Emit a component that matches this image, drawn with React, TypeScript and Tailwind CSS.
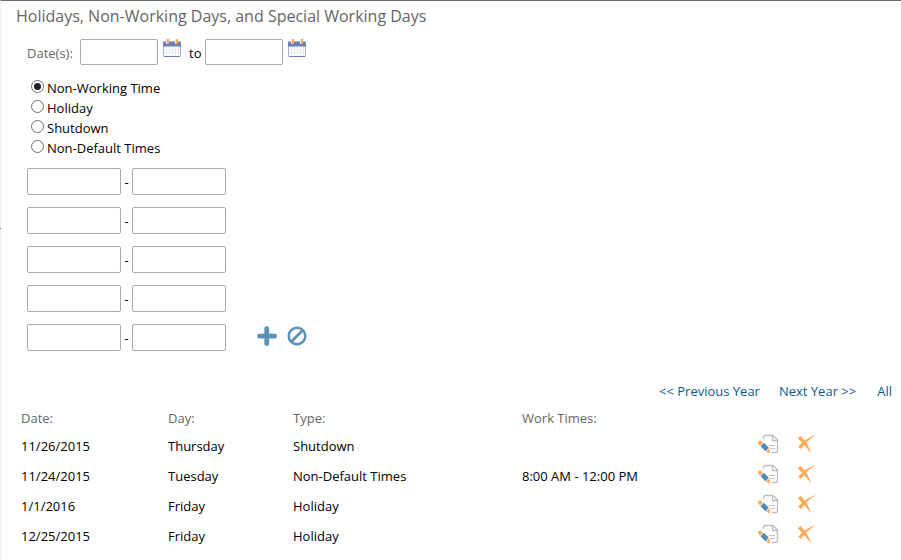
import React from 'react';

const CalendarIcon = () => (
    <svg width="19" height="19" viewBox="0 0 19 19" aria-hidden="true">
        <rect x="0.5" y="3.5" width="17" height="14" rx="1" fill="#fff" stroke="#a3aed0" />
        <path d="M3.5 8v9M6.5 8v9M9.5 8v9M12.5 8v9M15.5 8v9M1 10.5h16M1 13.5h16" stroke="#ececf0" fill="none" />
        <path d="M0 3.5q0-1 1-1h16q1 0 1 1v4H0z" fill="#6a7fb2" />
        <path d="M1 17.5h16" stroke="#6a7fb2" />
        <path d="M3 0h3v5H3zM12 0h3v5h-3z" fill="#fbe5d6" />
        <path d="M4 0h2v5H4zM13 0h2v5h-2z" fill="#f6a56b" />
    </svg>
);

const AddIcon = () => (
    <svg width="20" height="20" viewBox="0 0 20 20" aria-hidden="true">
        <path d="M10 2.8v14.9M2.8 10.2h14.9" stroke="#c4cbd0" strokeWidth="5" strokeLinecap="round" />
        <path d="M9.7 2.5v15M2.5 10h15" stroke="#5b92b8" strokeWidth="4.6" strokeLinecap="round" />
    </svg>
);

const CancelIcon = () => (
    <svg width="20" height="20" viewBox="0 0 20 20" aria-hidden="true">
        <circle cx="10" cy="10" r="8.3" fill="none" stroke="#5b92b8" strokeWidth="2.5" />
        <path d="M4.5 15.5l11-11" stroke="#5b92b8" strokeWidth="2.8" />
    </svg>
);

const EditIcon = () => (
    <svg width="21" height="20" viewBox="0 0 21 20" aria-hidden="true">
        <path d="M5.5 5V3.5q0-2 2-2H15l4.5 4.5v10.5q0 2-2 2H14" fill="none" stroke="#bcbdc0" strokeWidth="1.3" />
        <path d="M14.5 2v4.5h5" fill="none" stroke="#bcbdc0" strokeWidth="1.3" />
        <path d="M11 11.5h6M12 14.5h5" stroke="#c4c5c7" />
        <path d="M0 8.8q0-2.3 2.6-2.3l2.2 2.2-2.9 3z" fill="#fbaa5c" />
        <path d="M2.5 12.3l3.3-3.5 5 4.9-3.4 3.5z" fill="#4e8ab5" />
        <path d="M8 17.8l3.3-3.5 1 5.2z" fill="#fbaa5c" />
    </svg>
);

const DeleteIcon = () => (
    <svg width="20" height="20" viewBox="0 0 20 20" aria-hidden="true">
        <path d="M.8 4.3L3.6 2Q11 9 14.2 19.6Q8.500 12 .8 4.300z" fill="#fdaa58" />
        <path d="M19.300 1Q10 6 4 15L1.300 12.700Q8.500 3.900 19.300 1z" fill="#fdaa58" />
    </svg>
);

const types = ['Non-Working Time', 'Holiday', 'Shutdown', 'Non-Default Times'];

const timeRows = [1, 2, 3, 4, 5];

const days = [
    { date: '11/26/2015', day: 'Thursday', type: 'Shutdown', times: '' },
    { date: '11/24/2015', day: 'Tuesday', type: 'Non-Default Times', times: '8:00 AM - 12:00 PM' },
    { date: '1/1/2016', day: 'Friday', type: 'Holiday', times: '' },
    { date: '12/25/2015', day: 'Friday', type: 'Holiday', times: '' },
];

const inputClass = 'rounded-xs border border-[#a9a9ae] bg-white px-1 focus:outline-none focus:border-[#5b92b8]';

export default function App() {
    const [selected, setSelected] = React.useState(types[0]);

    return (
        <main className="relative min-h-screen border-t border-l border-t-[#6b6b6b] border-l-[#eeeeee] bg-white font-['Open_Sans',sans-serif] text-[13px] leading-5 text-black">
            <span className="absolute -left-px top-[227px] h-px w-px bg-[#3b8ec2]" />

            <h1 className="px-[15px] pt-[3px] text-base leading-6 text-[#666666]">Holidays, Non-Working Days, and Special Working Days</h1>

            <form className="px-[26px] pt-[11px]" onSubmit={(e) => e.preventDefault()}>
                <div className="flex items-start">
                    <label htmlFor="from" className="w-[53px] pt-1 text-[#666666]">Date(s):</label>
                    <input id="from" type="text" className={`${inputClass} h-[26px] w-[78px]`} />
                    <button type="button" aria-label="Pick start date" className="ml-[5px]"><CalendarIcon /></button>
                    <label htmlFor="to" className="ml-[7px] w-4 pt-1">to</label>
                    <input id="to" type="text" className={`${inputClass} h-[26px] w-[78px]`} />
                    <button type="button" aria-label="Pick end date" className="ml-[5px]"><CalendarIcon /></button>
                </div>

                <fieldset className="flex flex-col items-start pt-[13px] pl-1">
                    {types.map((type) => (
                        <label key={type} className="flex gap-[3px]">
                            <input
                                type="radio"
                                name="type"
                                value={type}
                                checked={selected === type}
                                onChange={() => setSelected(type)}
                                className="mt-[2px] grid size-[13px] appearance-none place-items-center rounded-full border border-[#707070] bg-white checked:before:size-[7px] checked:before:rounded-full checked:before:bg-[#222222]"
                            />
                            {type}
                        </label>
                    ))}
                </fieldset>

                <div className="flex items-end gap-[31px] pt-[10px]">
                    <div className="flex flex-col gap-3">
                        {timeRows.map((row) => (
                            <div key={row} className="flex items-center">
                                <input type="text" aria-label={`Start time ${row}`} className={`${inputClass} h-[27px] w-[94px]`} />
                                <span className="w-[11px] text-center">-</span>
                                <input type="text" aria-label={`End time ${row}`} className={`${inputClass} h-[27px] w-[94px]`} />
                            </div>
                        ))}
                    </div>
                    <div className="flex gap-[10px] pb-[5px]">
                        <button type="button" aria-label="Add"><AddIcon /></button>
                        <button type="reset" aria-label="Cancel"><CancelIcon /></button>
                    </div>
                </div>
            </form>

            <nav className="flex justify-end pt-[30px] pr-[9px] text-[#0a5a92]">
                <a href="#previous">&lt;&lt; Previous Year</a>
                <a href="#next" className="ml-[19px]">Next Year &gt;&gt;</a>
                <a href="#all" className="ml-[21px]">All</a>
            </nav>

            <div className="pt-[7px] pl-5">
                <table className="w-full table-fixed text-left">
                    <thead className="text-[#666666]">
                        <tr>
                            <th className="w-[147px] p-0 font-normal">Date:</th>
                            <th className="w-[125px] p-0 font-normal">Day:</th>
                            <th className="w-[229px] p-0 font-normal">Type:</th>
                            <th className="w-[236px] p-0 font-normal">Work Times:</th>
                            <th className="p-0" />
                        </tr>
                    </thead>
                    <tbody>
                        {days.map((d) => (
                            <tr key={d.date} className="h-[30px]">
                                <td className="p-0 pt-[5px]">{d.date}</td>
                                <td className="p-0 pt-[5px]">{d.day}</td>
                                <td className="p-0 pt-[5px]">{d.type}</td>
                                <td className="p-0 pt-[5px]">{d.times}</td>
                                <td className="p-0 pt-[2px]">
                                    <div className="flex gap-[18px]">
                                        <button type="button" aria-label={`Edit ${d.date}`}><EditIcon /></button>
                                        <button type="button" aria-label={`Delete ${d.date}`}><DeleteIcon /></button>
                                    </div>
                                </td>
                            </tr>
                        ))}
                    </tbody>
                </table>
            </div>
        </main>
    );
}
